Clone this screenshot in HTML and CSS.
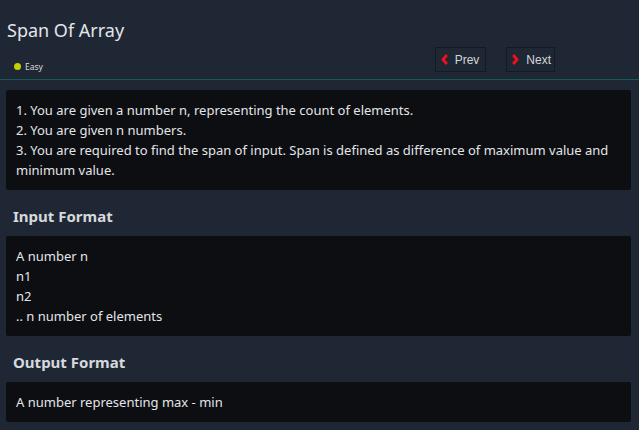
FILE: index.html
```
<!DOCTYPE html>
<html>
<head>
<meta charset="utf-8">
<link rel="stylesheet" href="styles.css">
</head>
<body>
<header class="head">
  <h1 class="title">Span Of Array</h1>
  <div class="meta">
    <div class="level"><span class="dot"></span><span>Easy</span></div>
    <div class="nav">
      <button class="btn btn-prev"><svg width="7" height="11" viewBox="0 0 7 11"><path d="M5.8 1 L2 5.5 L5.8 10" fill="none" stroke="#f0101c" stroke-width="2.8"/></svg>Prev</button>
      <button class="btn btn-next"><svg width="7" height="11" viewBox="0 0 7 11"><path d="M1.2 1 L5 5.5 L1.2 10" fill="none" stroke="#f0101c" stroke-width="2.8"/></svg>Next</button>
    </div>
  </div>
</header>
<main class="content">
  <div class="box">
    <p>1. You are given a number n, representing the count of elements.</p>
    <p>2. You are given n numbers.</p>
    <p>3. You are required to find the span of input. Span is defined as difference of maximum value and minimum value.</p>
  </div>
  <h2 class="sub">Input Format</h2>
  <div class="box">
    <p>A number n</p>
    <p>n1</p>
    <p>n2</p>
    <p>.. n number of elements</p>
  </div>
  <h2 class="sub">Output Format</h2>
  <div class="box">
    <p>A number representing max - min</p>
  </div>
</main>
</body>
</html>
```
FILE: styles.css
```
html, body { margin: 0; padding: 0; }
body {
  background: #1f2734;
  color: #e3e5e8;
  font-family: "Noto Sans", "Open Sans", sans-serif;
  width: 639px;
  height: 430px;
  overflow: hidden;
}
.head {
  border-bottom: 1px solid #165a5a;
  padding: 0 0 0 7px;
  height: 80px;
  box-sizing: border-box;
}
.title {
  margin: 0;
  padding-top: 17px;
  font-size: 18px;
  font-weight: 400;
  line-height: 26px;
  color: #e3e5e8;
}
.meta {
  display: flex;
  justify-content: space-between;
  align-items: flex-start;
}
.level {
  display: flex;
  align-items: center;
  gap: 4px;
  font-size: 8.5px;
  margin-top: 18px;
  padding-left: 7px;
  color: #d8dade;
}
.dot {
  width: 7px; height: 7px; border-radius: 50%;
  background: #c2d000;
}
.nav {
  display: flex;
  gap: 20px;
  margin-top: 4px;
  margin-right: 84px;
}
.btn {
  display: flex;
  align-items: center;
  gap: 7px;
  height: 25px;
  padding: 0 6px 0 5px;
  background: transparent;
  border: 1px solid #121a22;
  color: #d2d5da;
  font-family: "Liberation Sans", Arial, sans-serif;
  font-size: 12px;
}
.btn-next { padding-right: 3px; }
.content {
  padding: 10px 8px 0 6px;
}
.box {
  background: #0c0e12;
  border-radius: 2px;
  padding: 10px 10px;
  font-size: 13px;
  line-height: 20px;
  color: #e3e5e8;
}
.box p { margin: 0; }
.sub {
  margin: 0;
  padding: 16px 0 0 7px;
  height: 30px;
  font-size: 15px;
  font-weight: 700;
  line-height: 20px;
  color: #d6d9de;
}
```
